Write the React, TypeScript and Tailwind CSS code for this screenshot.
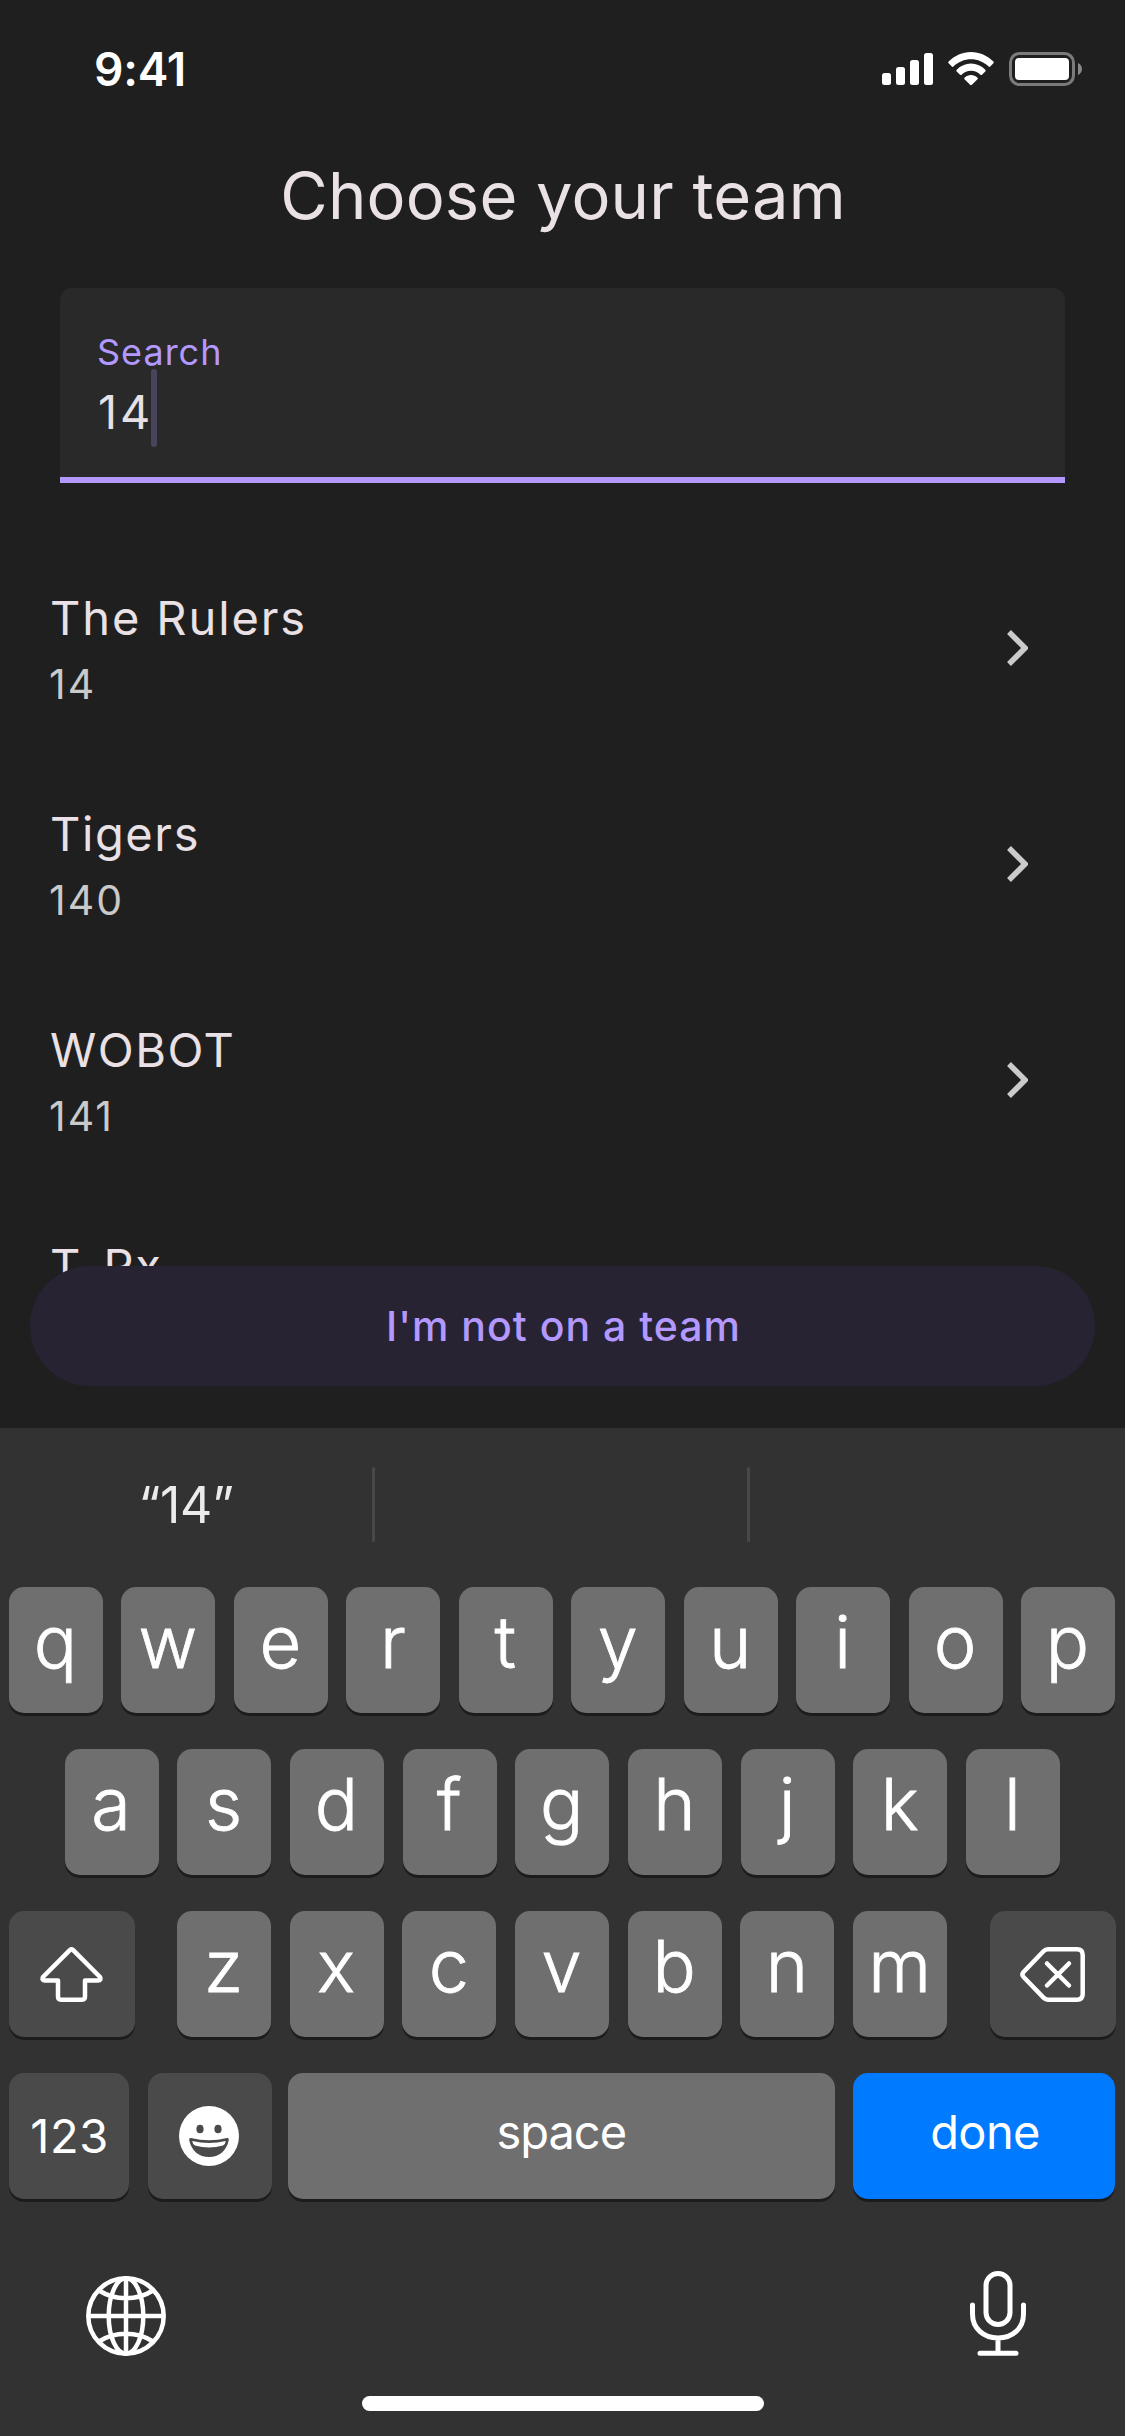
import type { ReactNode } from "react";

const teams = [
  { name: "The Rulers", number: "14", tracking: "tracking-[1.900px]" },
  { name: "Tigers", number: "140", tracking: "tracking-[1.600px]" },
  { name: "WOBOT", number: "141", tracking: "tracking-[1.500px]" },
  { name: "T_Rx", number: "142", tracking: "tracking-[1.400px]" },
];

function StatusBar() {
  return (
    <header className="flex h-[138px] shrink-0 items-center justify-between pr-[43px] pl-[94px] text-white">
      <span className="text-[46px] leading-none font-semibold tracking-[-0.200px]">9:41</span>
      <div className="flex items-center">
        <svg width="51" height="34" viewBox="0 0 51 34" fill="currentColor">
          <rect x="0" y="21" width="9" height="12" rx="2.5" />
          <rect x="14" y="15" width="9" height="18" rx="2.5" />
          <rect x="28" y="8" width="9" height="25" rx="2.5" />
          <rect x="42" y="1" width="9" height="32" rx="2.5" />
        </svg>
        <svg className="ml-[15px]" width="46" height="34" viewBox="0 0 46 34" fill="currentColor">
          <path d="M0.6 9.6C6.6 3.5 14.500 0 23 0s16.400 3.500 22.400 9.600c.5.5.5 1.200 0 1.700l-3.200 3.200c-.5.5-1.100.5-1.600 0C35.800 10 29.600 7.300 23 7.300S10.200 10 5.400 14.500c-.5.5-1.100.5-1.600 0L.6 11.300c-.5-.5-.5-1.200 0-1.700z" />
          <path d="M8.700 17.700C12.500 13.800 17.500 11.500 23 11.500s10.500 2.300 14.300 6.200c.5.5.5 1.200 0 1.700l-3.300 3.300c-.5.5-1.100.4-1.600 0-2.500-2.400-5.800-3.900-9.400-3.900s-6.900 1.500-9.400 3.900c-.5.4-1.100.5-1.600 0l-3.300-3.300c-.5-.5-.5-1.200 0-1.700z" />
          <path d="M16.500 25.700c1.800-1.600 4.100-2.600 6.500-2.600s4.700 1 6.500 2.600c.5.500.5 1.100 0 1.600l-5.600 5.500c-.5.5-1.300.5-1.800 0l-5.600-5.500c-.5-.5-.5-1.100 0-1.600z" />
        </svg>
        <svg className="ml-[15px]" width="73" height="34" viewBox="0 0 73 34">
          <rect x="1.500" y="1.500" width="63" height="31" rx="9" fill="none" stroke="#7b7b7b" strokeWidth="3" />
          <rect x="6" y="6" width="54" height="22" rx="4" fill="#fff" />
          <path d="M69 11c2.500 1 4 3.500 4 6s-1.500 5-4 6z" fill="#8a8a8a" />
        </svg>
      </div>
    </header>
  );
}

function SearchField() {
  return (
    <div className="mx-[60px] flex h-[195px] shrink-0 flex-col rounded-t-[12px] border-b-[6px] border-[#b399ff] bg-[#292929] px-[37px] pt-[46px]">
      <label className="text-[36px] leading-[36px] tracking-[1px] text-[#b399ff]">Search</label>
      <div className="flex h-[84px] items-start">
        <span className="w-[54px] pl-px text-[47px] leading-[84px] tracking-[3px] text-[#e6e1e5]">14</span>
        <span className="-mt-px h-[78px] w-[6px] rounded-full bg-[#49445c]" />
      </div>
    </div>
  );
}

function TeamRow({ name, number, tracking }: { name: string; number: string; tracking: string }) {
  return (
    <li className="flex h-[216px] items-center justify-between pr-[97px] pl-[49px]">
      <div className="mt-[5px]">
        <p className={`pl-px text-[47px] leading-[66px] text-[#e9e1e5] ${tracking}`}>{name}</p>
        <p className="text-[41px] leading-[66px] tracking-[2px] text-[#cacaca]">{number}</p>
      </div>
      <svg width="21" height="36" viewBox="0 0 21 36" fill="none" stroke="#cbcbcb" strokeWidth="5.500">
        <path d="M2 2l16 16L2 34" />
      </svg>
    </li>
  );
}

function Key({ children, className = "", label }: { children: ReactNode; className?: string; label?: string }) {
  return (
    <button
      aria-label={label}
      className={`flex h-[126px] items-center justify-center rounded-[15px] shadow-[0_3px_0_#1c1c1c] ${className}`}
    >
      {children}
    </button>
  );
}

function LetterKeys({ letters }: { letters: string }) {
  return letters.split("").map((l) => (
    <Key key={l} className="w-[94px] bg-[#6f6f6f] pr-px pb-[16px] text-[72px] leading-none font-light [-webkit-text-stroke:0.8px_white]">
      {l}
    </Key>
  ));
}

function ShiftIcon() {
  return (
    <svg width="63" height="55" viewBox="0 0 63 55" fill="none" stroke="currentColor" strokeWidth="4.500" strokeLinejoin="round">
      <path d="M29.800 3.200Q31.500 1.500 33.200 3.200L60 30Q61.500 33.500 58 33.500H45V49.500Q45 52.700 42 52.700H21Q18 52.700 18 49.500V33.500H5Q1.500 33.500 3 30Z" />
    </svg>
  );
}

function DeleteIcon() {
  return (
    <svg width="65" height="55" viewBox="0 0 65 55" fill="none" stroke="currentColor" strokeWidth="4.500" strokeLinecap="round" strokeLinejoin="round">
      <path d="M28 2.300H57Q62.700 2.300 62.700 8V47Q62.700 52.700 57 52.700H28Q25.500 52.700 23.500 50.700L3.300 29.700Q1.500 27.500 3.300 25.300L23.500 4.300Q25.500 2.300 28 2.300Z" />
      <path d="M27 16.500l22 22M49 16.500L27 38.500" />
    </svg>
  );
}

function EmojiIcon() {
  return (
    <svg width="60" height="60" viewBox="-30 -30 60 60">
      <circle r="30" fill="#fff" />
      <ellipse cx="-9" cy="-7" rx="3.600" ry="4.300" fill="#4a4a4a" />
      <ellipse cx="9" cy="-7" rx="3.600" ry="4.300" fill="#4a4a4a" />
      <path d="M-18 2Q0 6.500 18 2Q20.200 1.700 19.800 4C17.500 15 10 21 0 21S-17.500 15-19.800 4Q-20.200 1.700-18 2Z" fill="#4a4a4a" />
      <path d="M-16.800 5Q0 9 16.800 5Q16.500 8 14 9.500Q0 13.500-14 9.500Q-16.500 8-16.800 5Z" fill="#fff" />
    </svg>
  );
}

function GlobeIcon() {
  return (
    <svg width="80" height="80" viewBox="-40 -40 80 80" fill="none" stroke="#fff" strokeWidth="4.500">
      <circle r="37.700" />
      <ellipse rx="17.300" ry="37.700" />
      <path d="M0-38V38M-38 0H38M-27-25.500Q-15-17.800 0-17.800T27-25.500M-27 25.500Q-15 17.800 0 17.800T27 25.500" />
    </svg>
  );
}

function MicIcon() {
  return (
    <svg width="56" height="85" viewBox="0 0 56 85" fill="none" stroke="#fff" strokeWidth="5" strokeLinecap="round">
      <rect x="16" y="2.500" width="24" height="51" rx="12" />
      <path d="M2.500 34V43C2.500 57.500 13.500 67 28 67S53.500 57.500 53.500 43V34M28 67V82M10 82.300H46" />
    </svg>
  );
}

function Keyboard() {
  return (
    <section className="flex h-[1008px] shrink-0 flex-col bg-[#323232] text-white">
      <div className="flex h-[159px] items-start pt-[39px]">
        <div className="flex h-[75px] w-[372px] items-center justify-center pt-[2px] text-[50px] tracking-[-0.400px] text-[#ebebeb]">“14”</div>
        <div className="h-[75px] w-[3px] rounded-full bg-[#484848]" />
        <div className="h-[75px] w-[372px]" />
        <div className="h-[75px] w-[3px] rounded-full bg-[#484848]" />
      </div>
      <div className="flex flex-col gap-[36px]">
        <div className="flex gap-[18.450px] pl-[9px]">
          <LetterKeys letters="qwertyuiop" />
        </div>
        <div className="flex gap-[18.700px] pl-[64.500px]">
          <LetterKeys letters="asdfghjkl" />
        </div>
        <div className="flex pl-[9px]">
          <Key label="Shift" className="w-[125.500px] bg-[#4a4a4a] pr-px"><ShiftIcon /></Key>
          <div className="ml-[42.500px] flex gap-[18.700px]">
            <LetterKeys letters="zxcvbnm" />
          </div>
          <Key label="Delete" className="ml-[42.500px] w-[126px] bg-[#4a4a4a]"><DeleteIcon /></Key>
        </div>
        <div className="flex pl-[9px] text-[47px] leading-none">
          <Key className="w-[120px] bg-[#4a4a4a] pb-[2px] pl-px tracking-[0.600px]">123</Key>
          <Key label="Emoji" className="ml-[19px] w-[123.500px] bg-[#4a4a4a] pr-px"><EmojiIcon /></Key>
          <Key className="ml-[16.500px] w-[546.500px] bg-[#6f6f6f] pb-[10px] tracking-[-1px]">space</Key>
          <Key className="ml-[18.500px] w-[262px] bg-[#007aff] pb-[10px] pl-[2px] tracking-[-0.600px]">done</Key>
        </div>
      </div>
      <div className="flex items-start justify-between pt-[72px] pr-[99px] pl-[86px]">
        <div className="pt-[5px]"><GlobeIcon /></div>
        <MicIcon />
      </div>
      <div className="mx-auto mt-[40px] h-[15px] w-[402px] rounded-full bg-white" />
    </section>
  );
}

export default function App() {
  return (
    <main className="flex h-[2436px] w-[1125px] flex-col overflow-hidden bg-[#1f1f1f] font-['Inter',sans-serif]">
      <StatusBar />
      <h1 className="mb-[36px] h-[114px] shrink-0 pl-px text-center text-[65px] leading-[116px] tracking-[0.200px] text-[#e9e1e5]">
        Choose your team
      </h1>
      <SearchField />
      <div className="relative min-h-0 flex-1 overflow-hidden pt-[57px]">
        <ul>
          {teams.map((t) => (
            <TeamRow key={t.name} {...t} />
          ))}
        </ul>
        <div className="absolute inset-x-0 bottom-0 h-[42px] bg-[#1f1f1f]" />
        <button className="absolute inset-x-[30px] bottom-[42px] h-[120px] rounded-full bg-[#272333] pt-[2px] pl-[2px] text-[41px] font-medium tracking-[1px] text-[#b399ff]">
          I'm not on a team
        </button>
      </div>
      <Keyboard />
    </main>
  );
}
